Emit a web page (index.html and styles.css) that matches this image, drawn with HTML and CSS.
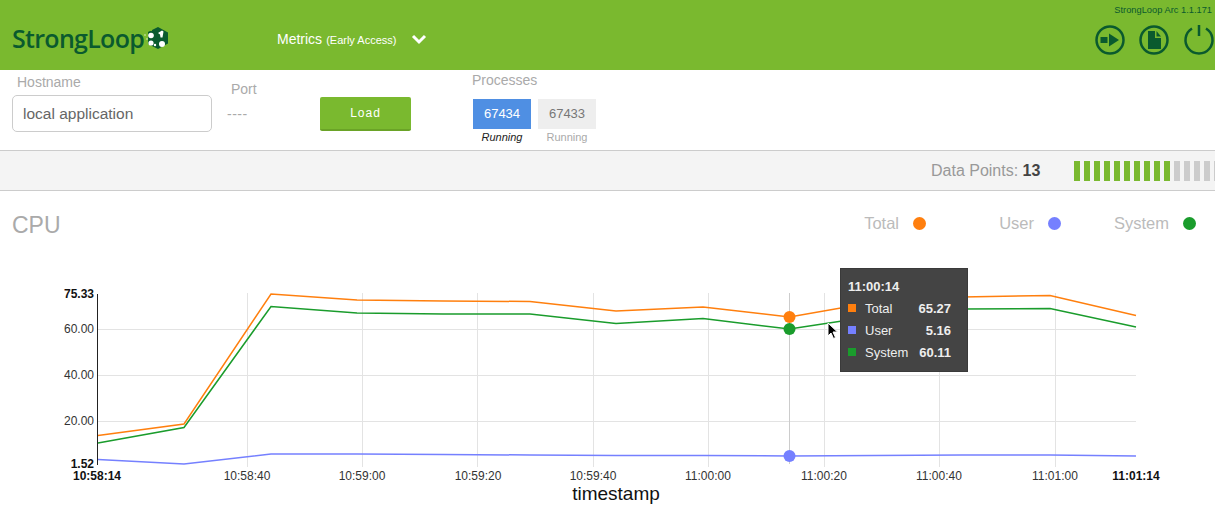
FILE: index.html
```html
<!DOCTYPE html>
<html lang="en">
  <head>
    <meta charset="UTF-8" />
    <title>StrongLoop Arc - Metrics</title>
    <link rel="stylesheet" href="styles.css">
  </head>

  <body>
    <!-- top bar -->
    <header class="topbar">
      <div class="logo">
        <span class="logo-text">StrongLoop</span>
        <svg class="logo-mark" width="25" height="24" viewBox="0 0 25 24">
          <path d="M14 1l10 5.500v11L14 23l-10-5V6z" fill="#0a5a2e" />
          <path d="M3 1h5v4H3zM3 20h4v3H3z" fill="#7ab92f" />
          <circle cx="7" cy="9.500" r="2.800" fill="#fff" />
          <path d="M14 7l4-2.500 1.500 1-1 6h-2l-.5-3z" fill="#fff" />
          <circle cx="18" cy="18" r="3" fill="#fff" />
          <circle cx="7" cy="17" r="2.600" fill="#fff" />
          <circle cx="11" cy="19" r="1.200" fill="#fff" />
          <circle cx="1" cy="9" r="0.800" fill="#dfeecb" />
          <circle cx="3" cy="13" r="0.800" fill="#dfeecb" />
        </svg>
      </div>

      <div class="module-menu">
        <span class="module-name">Metrics</span>
        <span class="module-note">(Early Access)</span>
        <svg class="chevron" width="16" height="11" viewBox="0 0 16 11">
          <path d="M2 2l6 6 6-6" fill="none" stroke="#fff" stroke-width="3" />
        </svg>
      </div>

      <div class="topbar-right">
        <div class="version">StrongLoop Arc 1.1.171</div>
        <div class="top-icons">
          <svg width="32" height="32" viewBox="0 0 32 32">
            <circle cx="16" cy="16" r="13.500" fill="none" stroke="#0a5a2e" stroke-width="2.500" />
            <rect x="6.500" y="13" width="7" height="6" fill="#0a5a2e" />
            <path d="M15 9.500l10 6.500-10 6.500z" fill="#0a5a2e" />
          </svg>
          <svg width="32" height="32" viewBox="0 0 32 32">
            <circle cx="16" cy="16" r="13.500" fill="none" stroke="#0a5a2e" stroke-width="2.500" />
            <path d="M10 7h7v7h6v11H10z M18.500 7l4.500 5.500h-4.500z" fill="#0a5a2e" />
          </svg>
          <svg class="power-icon" width="32" height="32" viewBox="0 0 32 32">
            <path d="M9 4.500a13.500 13.500 0 1 0 14 0" fill="none" stroke="#0a5a2e" stroke-width="2.500" />
            <path d="M16 1v11" fill="none" stroke="#0a5a2e" stroke-width="2.500" />
          </svg>
        </div>
      </div>
    </header>

    <!-- app controls -->
    <section class="controls">
      <div class="field field-host">
        <label class="field-label" for="hostname">Hostname</label>
        <input class="host-input" id="hostname" type="text" value="local application" />
      </div>
      <div class="field field-port">
        <span class="field-label">Port</span>
        <span class="port-value">----</span>
      </div>
      <button class="load-btn">Load</button>
      <div class="field field-procs">
        <span class="field-label">Processes</span>
        <div class="proc-list">
          <div class="proc">
            <div class="proc-id proc-id-active">67434</div>
            <div class="proc-state proc-state-active">Running</div>
          </div>
          <div class="proc">
            <div class="proc-id">67433</div>
            <div class="proc-state">Running</div>
          </div>
        </div>
      </div>
    </section>

    <!-- data points -->
    <section class="points-bar">
      <span class="points-label">Data Points: <b>13</b></span>
      <div class="ticks" id="ticks"></div>
    </section>

    <!-- cpu chart -->
    <section class="chart-section">
      <div class="chart-head">
        <h2 class="chart-title">CPU</h2>
        <div class="legend">
          <span class="legend-item">Total <i class="dot dot-total"></i></span>
          <span class="legend-item">User <i class="dot dot-user"></i></span>
          <span class="legend-item">System <i class="dot dot-system"></i></span>
        </div>
      </div>

      <div class="chart">
        <svg class="chart-svg" width="1215" height="330" viewBox="0 191 1215 330">
          <g class="grid">
            <path d="M98 329.500H1136M98 375.500H1136M98 421.500H1136" />
            <path d="M247.500 293V467M362.500 293V467M477.500 293V467M593.500 293V467M708.500 293V467M824.500 293V467M939.500 293V467M1055.500 293V467" />
          </g>
          <path class="hover-line" d="M789.500 293V464" />
          <path class="axis" d="M97.500 294V465" />

          <polyline class="line-total" points="98,435.500 184,424 271,294 357,300 443,301 530,301.500 616,311 703,307 789.500,317 875,302 962,297 1050,295.500 1136,315.500" />
          <polyline class="line-system" points="98,443 184,427.500 271,306.500 357,313 443,314 530,314 616,323.500 703,318.500 789.500,329 875,316 962,309 1050,308.500 1136,327" />
          <polyline class="line-user" points="98,459.500 184,464 271,454 357,454 443,454.500 530,455 616,455.500 703,455.500 789.500,456 875,455.500 962,455 1050,455 1136,456" />

          <circle cx="789.500" cy="317" r="6" fill="#ff7f0e" />
          <circle cx="789.500" cy="329" r="6" fill="#1a9c2c" />
          <circle cx="789.500" cy="456" r="6" fill="#7580ff" />

          <g class="y-labels">
            <text x="94" y="298" class="bold">75.33</text>
            <text x="94" y="333">60.00</text>
            <text x="94" y="379">40.00</text>
            <text x="94" y="425">20.00</text>
            <text x="94" y="468" class="bold">1.52</text>
          </g>
          <g class="x-labels">
            <text x="97" y="480" class="bold">10:58:14</text>
            <text x="247" y="480">10:58:40</text>
            <text x="362" y="480">10:59:00</text>
            <text x="478" y="480">10:59:20</text>
            <text x="593" y="480">10:59:40</text>
            <text x="708" y="480">11:00:00</text>
            <text x="824" y="480">11:00:20</text>
            <text x="939" y="480">11:00:40</text>
            <text x="1055" y="480">11:01:00</text>
            <text x="1136" y="480" class="bold">11:01:14</text>
          </g>
          <text class="x-title" x="616" y="500">timestamp</text>
        </svg>

        <div class="chart-tooltip">
          <div class="tip-time">11:00:14</div>
          <div class="tip-row"><i class="swatch swatch-total"></i><span class="tip-name">Total</span><b>65.27</b></div>
          <div class="tip-row"><i class="swatch swatch-user"></i><span class="tip-name">User</span><b>5.16</b></div>
          <div class="tip-row"><i class="swatch swatch-system"></i><span class="tip-name">System</span><b>60.11</b></div>
        </div>

        <svg class="cursor" width="12" height="18" viewBox="0 0 12 18">
          <path d="M1 1v13l3-3 2.500 5.500 2-1L6 10h4.500z" fill="#000" stroke="#fff" stroke-width="1" />
        </svg>
      </div>
    </section>

    <script>
      // first 10 ticks are filled, the rest run off the right edge
      const ticks = document.getElementById("ticks");
      for (let i = 0; i < 15; i++) {
        const tick = document.createElement("span");
        tick.className = i < 10 ? "tick tick-on" : "tick";
        ticks.appendChild(tick);
      }
    </script>
  </body>
</html>
```

FILE: styles.css
```css
* {
  box-sizing: border-box;
}

html,
body {
  margin: 0;
  height: 521px;
  overflow: hidden;
}

body {
  background: #fff;
  font-family: "Liberation Sans", Arial, sans-serif;
  color: #333;
}

/* top bar */
.topbar {
  height: 70px;
  background: #7ab92f;
  display: flex;
  align-items: center;
  padding-left: 12px;
}

.logo {
  width: 265px;
  display: flex;
  align-items: center;
  margin-top: 5px;
}

.logo-text {
  font-family: "Open Sans", sans-serif;
  font-weight: 600;
  font-size: 25px;
  letter-spacing: -0.7px;
  color: #0a5a2e;
}

.logo-mark {
  margin-left: 0;
}

.module-menu {
  color: #fff;
  display: flex;
  align-items: center;
  margin-top: 8px;
}

.module-name {
  font-size: 14px;
}

.module-note {
  font-size: 11px;
  margin-left: 4px;
  margin-top: 1px;
}

.chevron {
  margin-left: 15px;
}

.topbar-right {
  margin-left: auto;
  align-self: flex-start;
  width: 125px;
  padding-top: 5px;
}

.version {
  font-size: 9.300px;
  color: #0a5a2e;
  white-space: nowrap;
  text-align: right;
  padding-right: 3px;
  line-height: 10px;
}

.top-icons {
  display: flex;
  gap: 12px;
  margin-top: 9px;
  margin-left: 4px;
}

.power-icon {
  margin-left: 1px;
  flex-shrink: 0;
}

/* controls */
.controls {
  height: 81px;
  display: flex;
  border-bottom: 1px solid #ccc;
}

.field {
  display: flex;
  flex-direction: column;
}

.field-label {
  font-size: 14px;
  color: #aaa;
}

.field-host {
  width: 200px;
  margin-left: 12px;
  padding-top: 4px;
}

.field-host .field-label {
  margin-left: 5px;
  margin-bottom: 5px;
}

.host-input {
  width: 200px;
  height: 37px;
  border: 1px solid #ccc;
  border-radius: 5px;
  padding: 0 10px;
  font: 15.500px "Liberation Sans", Arial, sans-serif;
  color: #666;
}

.field-port {
  width: 93px;
  margin-left: 15px;
  padding-top: 11px;
}

.field-port .field-label {
  margin-left: 4px;
}

.port-value {
  font-size: 14px;
  letter-spacing: 0.5px;
  color: #aaa;
  margin-top: 9px;
}

.load-btn {
  width: 91px;
  height: 34px;
  margin-top: 27px;
  background: #7ab92f;
  color: #fff;
  font: 12px "Liberation Sans", Arial, sans-serif;
  letter-spacing: 1px;
  border: 0;
  border-bottom: 2px solid #6aa327;
  border-radius: 2px;
}

.field-procs {
  margin-left: 61px;
  padding-top: 2px;
}

.proc-list {
  display: flex;
  gap: 7px;
  margin-top: 11px;
  margin-left: 1px;
}

.proc {
  width: 58px;
  text-align: center;
}

.proc-id {
  height: 30px;
  line-height: 30px;
  font-size: 13px;
  color: #777;
  background: #eee;
}

.proc-id-active {
  background: #4f8fe3;
  color: #fff;
}

.proc-state {
  font-size: 11px;
  color: #aaa;
  margin-top: 2px;
}

.proc-state-active {
  color: #222;
  font-style: italic;
}

/* data points */
.points-bar {
  height: 40px;
  background: #f4f4f4;
  border-bottom: 1px solid #ccc;
  display: flex;
  align-items: center;
  overflow: hidden;
  padding-left: 931px;
}

.points-label {
  font-size: 16px;
  color: #999;
  white-space: nowrap;
  width: 143px;
  flex-shrink: 0;
}

.points-label b {
  color: #444;
}

.ticks {
  display: flex;
  gap: 4px;
  flex-shrink: 0;
}

.tick {
  width: 6px;
  height: 20px;
  background: #ccc;
}

.tick-on {
  background: #7ab92f;
}

/* chart */
.chart-section {
  position: relative;
  height: 330px;
}

.chart-head {
  display: flex;
  justify-content: space-between;
  padding: 21px 19px 0 12px;
}

.chart-title {
  margin: 0;
  font-size: 23px;
  font-weight: 400;
  color: #aaa;
}

.legend {
  display: flex;
  align-items: flex-start;
  padding-top: 2px;
}

.legend-item {
  display: flex;
  justify-content: flex-end;
  align-items: center;
  gap: 14px;
  width: 135px;
  font-size: 16.500px;
  color: #bbb;
}

.dot {
  width: 13px;
  height: 13px;
  border-radius: 50%;
}

.dot-total {
  background: #ff7f0e;
}

.dot-user {
  background: #7580ff;
}

.dot-system {
  background: #1a9c2c;
}

.chart-svg {
  position: absolute;
  left: 0;
  top: 0;
}

.grid path {
  fill: none;
  stroke: #e3e3e3;
  stroke-width: 1;
}

.hover-line {
  stroke: #ccc;
  stroke-width: 1;
}

.axis {
  stroke: #222;
  stroke-width: 1;
}

.line-total,
.line-system,
.line-user {
  fill: none;
  stroke-width: 1.500;
}

.line-total {
  stroke: #ff7f0e;
}

.line-system {
  stroke: #1a9c2c;
}

.line-user {
  stroke: #7580ff;
}

.chart-svg text {
  font-family: "Liberation Sans", Arial, sans-serif;
  font-size: 12px;
  fill: #333;
}

.chart-svg text.bold {
  font-weight: 700;
  fill: #111;
}

.y-labels text {
  text-anchor: end;
}

.x-labels text,
.chart-svg .x-title {
  text-anchor: middle;
}

.chart-svg .x-title {
  font-size: 19px;
  fill: #111;
}

.chart-tooltip {
  position: absolute;
  left: 840px;
  top: 77px;
  width: 128px;
  height: 104px;
  padding: 11px 16px 0 7px;
  background: #444;
  border: 1px solid #3a3a3a;
  color: #eee;
  font-size: 13px;
}

.tip-time {
  font-weight: 700;
  height: 17px;
  line-height: 14px;
}

.tip-row {
  display: flex;
  align-items: center;
  height: 22px;
}

.tip-name {
  flex: 1;
}

.swatch {
  width: 8px;
  height: 8px;
  margin-right: 9px;
}

.swatch-total {
  background: #ff7f0e;
}

.swatch-user {
  background: #7580ff;
}

.swatch-system {
  background: #1a9c2c;
}

.cursor {
  position: absolute;
  left: 827px;
  top: 131px;
}
```
